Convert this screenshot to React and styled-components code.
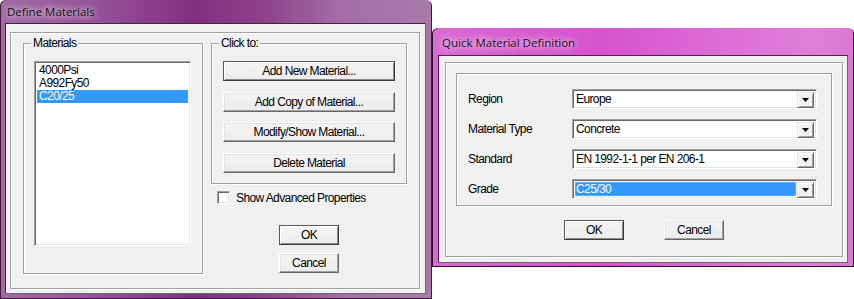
import React from "react";
import styled, { createGlobalStyle } from "styled-components";

const GlobalStyle = createGlobalStyle`
  html, body {
    margin: 0;
    padding: 0;
    background: #ffffff;
  }
  body {
    font-family: "Liberation Sans", Arial, sans-serif;
    font-size: 12px;
    letter-spacing: -0.6px;
    color: #000;
  }
`;

const Desktop = styled.div`
  display: flex;
  align-items: flex-start;
  width: 854px;
  height: 299px;
  overflow: hidden;
  background: #ffffff;
`;

const Window = styled.div`
  box-sizing: border-box;
  display: flex;
  flex-direction: column;
  width: ${(p) => p.$w}px;
  height: ${(p) => p.$h}px;
  margin-top: ${(p) => p.$top || 0}px;
  padding: 0 6px 5px ${(p) => p.$side}px;
  background: ${(p) => p.$frame};
  border-radius: 6px 6px 0 0;
  box-shadow: inset -1px -1px 0 ${(p) => p.$edge}, inset 1px 0 0 ${(p) => p.$edge};
`;

const TitleBar = styled.div`
  height: ${(p) => p.$h}px;
  flex: none;
  display: flex;
  align-items: center;
  padding-left: ${(p) => p.$pad}px;
  padding-top: ${(p) => p.$padTop || 0}px;
  box-sizing: border-box;
  font-family: "Open Sans", "Noto Sans", sans-serif;
  font-size: 11.5px;
  letter-spacing: 0;
  color: #141414;
  span {
    text-shadow: 0 0 6px rgba(255, 255, 255, 0.9), 0 0 10px rgba(255, 255, 255, 0.6);
  }
`;

const Client = styled.div`
  flex: 1;
  display: flex;
  flex-direction: column;
  background: #f0f0f0;
  border: 1px solid #6a6a6a;
  border-top-color: ${(p) => p.$topLine};
  border-left-color: ${(p) => p.$topLine};
  padding: ${(p) => p.$pad};
`;

const Panel = styled.div`
  flex: 1;
  display: flex;
  border: 1px solid #a0a0a0;
  box-shadow: inset 1px 1px 0 #ffffff, 1px 1px 0 #ffffff;
  padding: ${(p) => p.$pad};
  gap: ${(p) => p.$gap || 0}px;
  flex-direction: ${(p) => (p.$column ? "column" : "row")};
  align-items: ${(p) => (p.$column ? "center" : "flex-start")};
`;

const GroupBox = styled.div`
  position: relative;
  box-sizing: border-box;
  width: ${(p) => p.$w}px;
  height: ${(p) => p.$h}px;
  border: 1px solid #a0a0a0;
  box-shadow: inset 1px 1px 0 #ffffff, 1px 1px 0 #ffffff;
  padding: ${(p) => p.$pad};
  display: flex;
  flex-direction: column;
  gap: ${(p) => p.$gap || 0}px;
`;

const Caption = styled.span`
  position: absolute;
  top: -7px;
  left: 7px;
  padding: 0 2px;
  background: #f0f0f0;
  line-height: 13px;
`;

const ListBox = styled.div`
  box-sizing: border-box;
  width: 157px;
  height: 185px;
  background: #ffffff;
  border: 1px solid;
  border-color: #a0a0a0 #ffffff #ffffff #a0a0a0;
  box-shadow: inset 1px 1px 0 #696969, inset -1px -1px 0 #e3e3e3;
  padding: 2px 2px;
`;

const ListItem = styled.div`
  height: 13px;
  line-height: 13px;
  padding-left: 2px;
  background: ${(p) => (p.$selected ? "#3399ff" : "transparent")};
  color: ${(p) => (p.$selected ? "#ffffff" : "#000000")};
`;

const Column = styled.div`
  display: flex;
  flex-direction: column;
  width: 196px;
`;

const Button = styled.button`
  box-sizing: border-box;
  width: ${(p) => p.$w}px;
  height: 20px;
  flex: none;
  padding: 0;
  font: inherit;
  letter-spacing: inherit;
  color: #000;
  background: linear-gradient(#f4f4f4, #ececec);
  border: 1px solid ${(p) => (p.$default ? "#5a5a5a" : "#ffffff")};
  border-right-color: ${(p) => (p.$default ? "#3a3a3a" : "#696969")};
  border-bottom-color: ${(p) => (p.$default ? "#3a3a3a" : "#696969")};
  box-shadow: ${(p) =>
    p.$default
      ? "inset 1px 1px 0 #ffffff, inset -1px -1px 0 #8a8a8a"
      : "inset -1px -1px 0 #a0a0a0, inset 1px 1px 0 #e3e3e3"};
  line-height: 16px;
`;

const CheckRow = styled.label`
  display: flex;
  align-items: center;
  gap: 6px;
  margin: 7px 0 0 6px;
  height: 13px;
`;

const CheckBox = styled.span`
  box-sizing: border-box;
  width: 13px;
  height: 13px;
  background: #ffffff;
  border: 1px solid;
  border-color: #a0a0a0 #ffffff #ffffff #a0a0a0;
  box-shadow: inset 1px 1px 0 #696969, inset -1px -1px 0 #e3e3e3;
`;

const DialogButtons = styled.div`
  display: flex;
  flex-direction: column;
  align-items: center;
  gap: 8px;
  margin-top: 21px;
`;

const FormRow = styled.div`
  display: flex;
  align-items: center;
  height: 20px;
`;

const FieldLabel = styled.span`
  width: 104px;
  flex: none;
`;

const Combo = styled.div`
  box-sizing: border-box;
  display: flex;
  width: 245px;
  height: 20px;
  background: #ffffff;
  border: 1px solid;
  border-color: #a0a0a0 #ffffff #ffffff #a0a0a0;
  box-shadow: inset 1px 1px 0 #696969, inset -1px -1px 0 #e3e3e3;
  padding: 2px;
`;

const ComboText = styled.div`
  flex: 1;
  line-height: 14px;
  padding-left: 1px;
  background: ${(p) => (p.$focused ? "#3399ff" : "transparent")};
  color: ${(p) => (p.$focused ? "#ffffff" : "#000000")};
  outline: ${(p) => (p.$focused ? "1px dotted #e8a040" : "none")};
  outline-offset: -1px;
  margin-right: 1px;
`;

const ArrowButton = styled.div`
  box-sizing: border-box;
  width: 17px;
  height: 16px;
  flex: none;
  display: flex;
  align-items: center;
  justify-content: center;
  background: #f0f0f0;
  border: 1px solid;
  border-color: #e3e3e3 #696969 #696969 #e3e3e3;
  box-shadow: inset 1px 1px 0 #ffffff, inset -1px -1px 0 #a0a0a0;
`;

const ButtonRow = styled.div`
  display: flex;
  justify-content: center;
  gap: 40px;
  margin-top: 14px;
`;

function Arrow() {
  return (
    <svg width="7" height="4" viewBox="0 0 7 4">
      <path d="M0 0h7L3.5 4z" fill="#000" />
    </svg>
  );
}

const materials = ["4000Psi", "A992Fy50", "C20/25"];
const actions = [
  "Add New Material...",
  "Add Copy of Material...",
  "Modify/Show Material...",
  "Delete Material",
];
const fields = [
  { label: "Region", value: "Europe" },
  { label: "Material Type", value: "Concrete" },
  { label: "Standard", value: "EN 1992-1-1 per EN 206-1" },
  { label: "Grade", value: "C25/30", focused: true },
];

export default function App() {
  return (
    <>
      <GlobalStyle />
      <Desktop>
        <Window
          $w={432}
          $h={299}
          $side={5}
          $edge="#3c1a3a"
          $frame="linear-gradient(90deg, #a06aa4 0%, #97559b 20%, #822f7e 45%, #8d4089 60%, #a56ea8 80%, #a979ab 100%)"
        >
          <TitleBar $h={23} $pad={2}>
            <span>Define Materials</span>
          </TitleBar>
          <Client $topLine="#4a2048" $pad="8px 5px 4px 4px">
            <Panel $pad="10px 12px 0 12px" $gap={8}>
              <GroupBox $w={180} $h={231} $pad="17px 0 0 10px">
                <Caption>Materials</Caption>
                <ListBox>
                  {materials.map((m, i) => (
                    <ListItem key={m} $selected={i === 2}>
                      {m}
                    </ListItem>
                  ))}
                </ListBox>
              </GroupBox>
              <Column>
                <GroupBox $w={196} $h={141} $pad="17px 0 0 11px" $gap={10.6}>
                  <Caption>Click to:</Caption>
                  {actions.map((a, i) => (
                    <Button key={a} $w={172} $default={i === 0}>
                      {a}
                    </Button>
                  ))}
                </GroupBox>
                <CheckRow>
                  <CheckBox />
                  Show Advanced Properties
                </CheckRow>
                <DialogButtons>
                  <Button $w={60} $default>
                    OK
                  </Button>
                  <Button $w={60}>Cancel</Button>
                </DialogButtons>
              </Column>
            </Panel>
          </Client>
        </Window>
        <Window
          $w={422}
          $h={239}
          $top={28}
          $side={6}
          $edge="#2a1028"
          $frame="linear-gradient(90deg, #d86cd2 0%, #d85ed0 20%, #d652cc 40%, #dc6ad6 65%, #e07ed8 90%, #dc78d4 100%)"
        >
          <TitleBar $h={27} $pad={4} $padTop={2}>
            <span>Quick Material Definition</span>
          </TitleBar>
          <Client $topLine="#5a1a58" $pad="6px 4px 5px 6px">
            <Panel $pad="10px 10px 16px 10px" $column>
              <GroupBox $w={376} $h={133} $pad="15px 0 0 11px" $gap={10}>
                {fields.map((f) => (
                  <FormRow key={f.label}>
                    <FieldLabel>{f.label}</FieldLabel>
                    <Combo>
                      <ComboText $focused={f.focused}>{f.value}</ComboText>
                      <ArrowButton>
                        <Arrow />
                      </ArrowButton>
                    </Combo>
                  </FormRow>
                ))}
              </GroupBox>
              <ButtonRow>
                <Button $w={60} $default>
                  OK
                </Button>
                <Button $w={60}>Cancel</Button>
              </ButtonRow>
            </Panel>
          </Client>
        </Window>
      </Desktop>
    </>
  );
}
